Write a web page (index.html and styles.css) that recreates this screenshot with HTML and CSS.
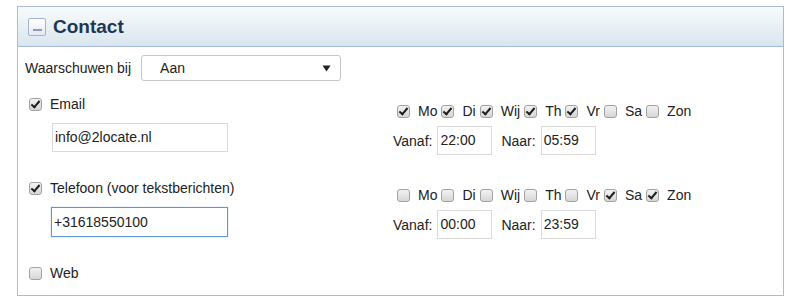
FILE: index.html
```html
<!DOCTYPE html>
<html lang="nl">
<head>
    <meta charset="UTF-8">
    <title>Contact</title>
    <link rel="stylesheet" href="styles.css">
</head>
<body>

    <div class="panel">
        <!-- Kop van het paneel -->
        <div class="panel-header">
            <span class="collapse-btn"><span class="bar"></span></span>
            <h2>Contact</h2>
        </div>

        <div class="panel-body">
            <div class="alert-row">
                <span>Waarschuwen bij</span>
                <div class="select">
                    <span>Aan</span>
                    <svg width="9" height="7" viewBox="0 0 9 7"><path d="M0.5 0.5 H8.5 L4.5 6.5 Z" fill="#222"/></svg>
                </div>
            </div>

            <!-- Email -->
            <div class="channel">
                <div class="channel-left">
                    <label class="check-line"><span class="cb checked"></span> Email</label>
                    <div class="text-input">info@2locate.nl</div>
                </div>
                <div class="channel-right">
                    <div class="days">
                        <span class="day"><span class="cb checked"></span>Mo</span>
                        <span class="day"><span class="cb checked"></span>Di</span>
                        <span class="day"><span class="cb checked"></span>Wij</span>
                        <span class="day"><span class="cb checked"></span>Th</span>
                        <span class="day"><span class="cb checked"></span>Vr</span>
                        <span class="day"><span class="cb"></span>Sa</span>
                        <span class="day"><span class="cb"></span>Zon</span>
                    </div>
                    <div class="times">
                        <span>Vanaf:</span><div class="time-input">22:00</div>
                        <span class="naar">Naar:</span><div class="time-input">05:59</div>
                    </div>
                </div>
            </div>

            <!-- Telefoon -->
            <div class="channel">
                <div class="channel-left">
                    <label class="check-line"><span class="cb checked"></span> Telefoon (voor tekstberichten)</label>
                    <div class="text-input focus">+31618550100</div>
                </div>
                <div class="channel-right">
                    <div class="days">
                        <span class="day"><span class="cb"></span>Mo</span>
                        <span class="day"><span class="cb"></span>Di</span>
                        <span class="day"><span class="cb"></span>Wij</span>
                        <span class="day"><span class="cb"></span>Th</span>
                        <span class="day"><span class="cb"></span>Vr</span>
                        <span class="day"><span class="cb checked"></span>Sa</span>
                        <span class="day"><span class="cb checked"></span>Zon</span>
                    </div>
                    <div class="times">
                        <span>Vanaf:</span><div class="time-input">00:00</div>
                        <span class="naar">Naar:</span><div class="time-input">23:59</div>
                    </div>
                </div>
            </div>

            <!-- Web -->
            <label class="check-line web"><span class="cb"></span> Web</label>
        </div>
    </div>

</body>
</html>
```

FILE: styles.css
```css
body, html {
    margin: 0;
    padding: 0;
    background: #fff;
    font-family: "Liberation Sans", Arial, sans-serif;
    font-size: 14px;
    color: #222;
}

.panel {
    margin: 6px 16px 0 17px;
    border: 1px solid #a9bcd7;
    background: #fff;
}

.panel-header {
    height: 39px;
    display: flex;
    align-items: center;
    padding-left: 10px;
    border-bottom: 1px solid #a9bcd7;
    background: linear-gradient(#f8fbfc, #d9e5ee);
}

.panel-header h2 {
    margin: 0 0 0 7px;
    font-size: 19px;
    font-weight: bold;
    color: #1d3654;
}

.collapse-btn {
    width: 16px;
    height: 16px;
    border: 1px solid #a3b5d5;
    border-radius: 2px;
    background: linear-gradient(#ffffff, #e3e9f2);
    display: flex;
    justify-content: center;
    align-items: flex-end;
}

.collapse-btn .bar {
    width: 9px;
    height: 2px;
    margin-bottom: 4px;
    background: #8d9cb9;
}

.panel-body {
    padding: 8px 7px 12px 7px;
}

.alert-row {
    display: flex;
    align-items: center;
    gap: 10px;
    height: 26px;
}

.select {
    height: 24px;
    border: 1px solid #c6c6c6;
    border-radius: 3px;
    display: flex;
    align-items: center;
    justify-content: space-between;
    padding: 0 9px 0 18px;
    width: 171px;
}

.channel {
    display: flex;
    margin-top: 13px;
}

.channel + .channel {
    margin-top: 26px;
}

.channel-left {
    width: 368px;
}

.check-line {
    display: flex;
    align-items: center;
    height: 20px;
}

.check-line .cb {
    margin: 0 8px 0 4px;
}

.text-input {
    margin: 9px 0 0 27px;
    width: 172px;
    height: 27px;
    line-height: 27px;
    padding-left: 2px;
    border: 1px solid #dadada;
}

.text-input.focus {
    margin-left: 26px;
    width: 173px;
    height: 28px;
    line-height: 28px;
    border-color: #5f95dc;
    box-shadow: 0 0 1px #8fb4e6;
}

.channel-right {
    padding-top: 7px;
    margin-bottom: -3px;
}

.days {
    display: flex;
    align-items: center;
    height: 20px;
    padding-left: 4px;
}

.day {
    display: flex;
    align-items: center;
    margin-right: 4px;
}

.day .cb {
    margin-right: 8px;
}

.times {
    display: flex;
    align-items: center;
    margin-top: 5px;
}

.times .naar {
    margin-left: 9px;
}

.time-input {
    width: 51px;
    height: 27px;
    line-height: 27px;
    padding-left: 2px;
    margin-left: 5px;
    border: 1px solid #dadada;
}

.cb {
    width: 11px;
    height: 11px;
    border: 1px solid #a2a2a2;
    border-radius: 3px;
    background: linear-gradient(#f2f2f2, #d6d6d6);
    display: inline-block;
    flex: none;
    position: relative;
}

.cb.checked::after {
    content: "";
    position: absolute;
    left: 3px;
    top: 0px;
    width: 3px;
    height: 7px;
    border: solid #1e1e1e;
    border-width: 0 2px 2px 0;
    transform: rotate(40deg);
}

.web {
    margin-top: 26px;
}
```
